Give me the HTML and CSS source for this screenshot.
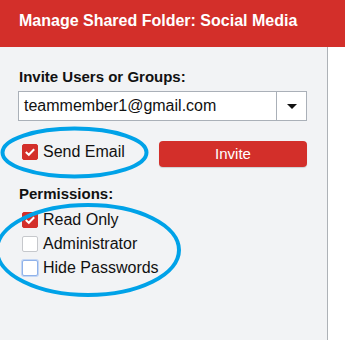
FILE: index.html
```html
<!DOCTYPE html>
<html>
<head>
  <meta charset="UTF-8">
  <meta name="viewport" content="width=device-width, initial-scale=1.0">
  <link rel="stylesheet" href="styles.css">
</head>
<body>
  <div class="header">Manage Shared Folder: Social Media</div>
  <div class="main">
    <div class="panel">
      <div class="field-label">Invite Users or Groups:</div>
      <div class="select-box">
        <span class="select-value">teammember1@gmail.com</span>
        <span class="select-toggle"><span class="caret"></span></span>
      </div>
      <div class="invite-row">
        <label class="check-item send-email">
          <span class="box checked">
            <svg width="16" height="16" viewBox="0 0 16 16"><polyline points="3.8,8 6.8,10.8 12.2,5.2" fill="none" stroke="#fff" stroke-width="2"/></svg>
          </span>
          Send Email
        </label>
        <button class="invite-button">Invite</button>
      </div>
      <div class="field-label permissions-label">Permissions:</div>
      <div class="perm-list">
        <label class="check-item">
          <span class="box checked">
            <svg width="16" height="16" viewBox="0 0 16 16"><polyline points="3.8,8 6.8,10.8 12.2,5.2" fill="none" stroke="#fff" stroke-width="2"/></svg>
          </span>
          Read Only
        </label>
        <label class="check-item">
          <span class="box"></span>
          Administrator
        </label>
        <label class="check-item">
          <span class="box focused"></span>
          Hide Passwords
        </label>
      </div>
    </div>
    <div class="side"></div>
  </div>

  <!-- annotation circles drawn over the form -->
  <svg class="marks" width="345" height="340" viewBox="0 0 345 340">
    <ellipse cx="74.5" cy="152.5" rx="72" ry="24" fill="none" stroke="#00a2e8" stroke-width="4"/>
    <ellipse cx="88" cy="250" rx="91" ry="45" fill="none" stroke="#00a2e8" stroke-width="4"/>
  </svg>
</body>
</html>
```

FILE: styles.css
```css
* {
  box-sizing: border-box;
  font-family: 'Liberation Sans', Arial, sans-serif;
}
body {
  margin: 0;
  padding: 0;
  width: 345px;
  height: 340px;
  overflow: hidden;
  position: relative;
  background: #fff;
  color: #111;
}
.header {
  height: 47px;
  background: #d32f2a;
  color: #fff;
  font-weight: bold;
  font-size: 16px;
  line-height: 20px;
  padding: 11px 0 0 19px;
}
.main {
  display: flex;
  height: 293px;
}
.panel {
  width: 327px;
  background: #f2f3f5;
  padding: 21px 20px 0 18px;
}
.side {
  flex: 1;
  border-left: 1px solid #aeb2b7;
  background: #fff;
}
.field-label {
  font-weight: bold;
  font-size: 15px;
  line-height: 18px;
  padding-left: 1px;
}
.select-box {
  display: flex;
  margin-top: 5px;
  height: 30px;
  width: 289px;
  border: 1px solid #aab0b8;
  background: #fff;
}
.select-value {
  flex: 1;
  font-size: 16px;
  line-height: 28px;
  padding-left: 5px;
  color: #111;
}
.select-toggle {
  width: 30px;
  border-left: 1px solid #aab0b8;
  display: flex;
  align-items: center;
  justify-content: center;
}
.caret {
  width: 0;
  height: 0;
  border-left: 5px solid transparent;
  border-right: 5px solid transparent;
  border-top: 5px solid #111;
}
.invite-row {
  display: flex;
  justify-content: space-between;
  align-items: flex-start;
  margin-top: 20px;
  height: 26px;
}
.check-item {
  display: flex;
  align-items: center;
  gap: 5px;
  font-size: 16px;
  padding-left: 4px;
  color: #111;
}
.send-email {
  margin-top: 2px;
  line-height: 18px;
}
.box {
  width: 16px;
  height: 16px;
  border: 1px solid #c6c8cc;
  border-radius: 2px;
  background: #fff;
  display: block;
  flex-shrink: 0;
}
.box.checked {
  background: #d32f2a;
  border-color: #d32f2a;
}
.box.checked svg {
  display: block;
  margin: -1px;
}
.box.focused {
  border-color: #8fb2ea;
  box-shadow: 0 0 0 1px #c3d6f4;
}
.invite-button {
  width: 148px;
  height: 26px;
  border: none;
  border-radius: 4px;
  background: #d32f2a;
  color: #fff;
  font-size: 15px;
  line-height: 26px;
  padding: 0;
  box-shadow: 0 1px 1px rgba(0, 0, 0, 0.15);
}
.permissions-label {
  margin-top: 18px;
}
.perm-list {
  margin-top: 5px;
}
.perm-list .check-item {
  height: 24px;
  line-height: 24px;
}
.marks {
  position: absolute;
  top: 0;
  left: 0;
  pointer-events: none;
}
```
